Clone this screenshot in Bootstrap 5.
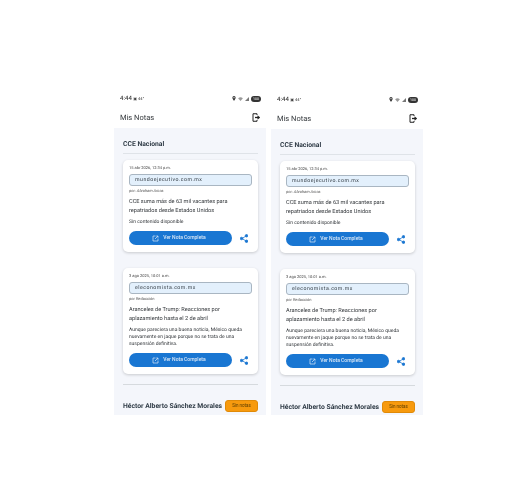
<!DOCTYPE html>
<html lang="es">

<head>
  <meta charset="UTF-8">
  <meta name="viewport" content="width=device-width, initial-scale=1.0">
  <link rel="stylesheet" href="https://cdn.jsdelivr.net/npm/bootstrap@5.3.0/dist/css/bootstrap.min.css">
  <title>Mis Notas</title>
  <style>
    body {
      font-family: Roboto, "Liberation Sans", sans-serif;
      background-color: #fff;
      color: #2b2f33;
      text-rendering: geometricPrecision;
    }

    .screens {
      padding: 90px 0 0 114px;
      gap: 5px;
    }

    .phone {
      width: 152px;
      height: 325px;
      overflow: hidden;
      background-color: #fff;
      filter: blur(.3px);
    }

    .phone-b {
      margin-top: 1px;
      height: 324px;
    }

    .status-bar {
      height: 17px;
      padding: 0 5px 0 6px;
      font-size: 6px;
      color: #444;
    }

    .status-time {
      font-weight: 500;
    }

    .status-sub {
      font-size: 4px;
    }

    .status-icons {
      gap: 2px;
    }

    .battery {
      width: 10px;
      height: 6px;
      border-radius: 3px;
      background-color: #333;
      color: #fff;
      font-size: 3.5px;
      line-height: 6px;
      text-align: center;
    }

    .app-bar {
      height: 21px;
      padding: 0 6px 0 6px;
      font-size: 7.5px;
      color: #33373b;
    }

    .notes-panel {
      background-color: #f4f6fb;
      height: 287px;
      padding: 11px 8px 0 9px;
    }

    .section-name {
      font-size: 6.8px;
      font-weight: 700;
      color: #2f3b46;
      line-height: 10px;
      margin: 0;
    }

    .section-rule {
      border-top: 1px solid #dfe3e8;
      margin: 4px 0 6px;
    }

    .note-card {
      background-color: #fff;
      border-radius: 5px;
      box-shadow: 0 1px 3px rgba(0, 0, 0, .18);
      padding: 5px 6px 7px;
    }

    .note-date {
      font-size: 4px;
      line-height: 6px;
      color: #444;
    }

    .url-box {
      height: 12px;
      margin-top: 3px;
      padding-left: 5px;
      font-size: 5.2px;
      letter-spacing: .5px;
      line-height: 10px;
      color: #39424a;
      background-color: #e3f0fc;
      border: 1px solid #a9b6c2;
      border-radius: 3px;
    }

    .note-author {
      font-size: 4px;
      line-height: 6px;
      margin-top: 2px;
      color: #555;
    }

    .note-title {
      font-size: 5.6px;
      line-height: 8.5px;
      margin-top: 4px;
      color: #33373b;
    }

    .note-body {
      font-size: 5px;
      line-height: 7px;
      margin-top: 4px;
      color: #33373b;
    }

    .note-actions {
      margin-top: 5px;
    }

    .full-btn {
      width: 103px;
      height: 14px;
      padding: 0 3px 0 0;
      font-size: 5px;
      font-weight: 500;
      border: 0;
      border-radius: 7px;
      background-color: #1976d2;
      color: #dce9f7;
    }

    .share-icon {
      margin-left: 8px;
    }

    .note-gap {
      height: 16px;
    }

    .list-rule {
      border-top: 1px solid #d6dade;
      margin: 10px 0 15px;
    }

    .person-row {
      height: 12px;
    }

    .none-btn {
      width: 33px;
      height: 12px;
      padding: 0;
      font-size: 4.5px;
      color: #5a3c00;
      background-color: #f79a0e;
      border: 1px solid #e08a08;
      border-radius: 3px;
    }
  </style>
</head>

<body>
  <div class="screens d-flex align-items-start">
    <div class="phone">
      <div class="status-bar d-flex align-items-center justify-content-between">
        <span class="status-time">4:44 <span class="status-sub">▣ 44°</span></span>
        <span class="status-icons d-flex align-items-center">
          <svg width="4" height="5" viewBox="0 0 10 12"><path d="M5 0a4 4 0 0 0-4 4c0 3 4 8 4 8s4-5 4-8a4 4 0 0 0-4-4z" fill="#333"/><circle cx="5" cy="4" r="1.5" fill="#fff"/></svg>
          <svg width="5" height="4" viewBox="0 0 12 10"><path d="M0 3a9 9 0 0 1 12 0L6 10z" fill="#999"/></svg>
          <svg width="4" height="4" viewBox="0 0 10 10"><path d="M10 0v10H0z" fill="#777"/></svg>
          <span class="battery">100</span>
        </span>
      </div>
      <div class="app-bar d-flex align-items-center justify-content-between">
        <span>Mis Notas</span>
        <svg width="8" height="9" viewBox="0 0 16 18" fill="none" stroke="#222" stroke-width="2"><path d="M10 4V1.500H2v15h8V14"/><path d="M6 9h9" stroke-width="2.600"/><path d="M11.500 5.500L15.500 9l-4 3.500z" fill="#222" stroke-width="1"/></svg>
      </div>
      <div class="notes-panel">
        <h2 class="section-name">CCE Nacional</h2>
        <div class="section-rule"></div>
        <div class="note-card">
          <div class="note-date">15 abr 2026, 12:34 p.m.</div>
          <div class="url-box">mundoejecutivo.com.mx</div>
          <div class="note-author">por: <em>Abraham Arcos</em></div>
          <div class="note-title">CCE suma más de 63 mil vacantes para repatriados desde Estados Unidos</div>
          <div class="note-body">Sin contenido disponible</div>
          <div class="note-actions d-flex align-items-center">
            <button class="btn full-btn d-flex align-items-center justify-content-center gap-1" type="button">
              <svg width="7" height="7" viewBox="0 0 14 14" fill="none" stroke="#dce9f7" stroke-width="1.4"><path d="M7 2H2v10h10V7"/><path d="M6 8l6-6M8.5 2H12v3.5"/></svg>
              Ver Nota Completa
            </button>
            <svg class="share-icon" width="8" height="9" viewBox="0 0 16 18" fill="none" stroke="#1976d2" stroke-width="1.6"><path d="M12 4L4 9l8 5"/><circle cx="13" cy="3.5" r="2.5" fill="#1976d2"/><circle cx="3" cy="9" r="2.5" fill="#1976d2"/><circle cx="13" cy="14.5" r="2.5" fill="#1976d2"/></svg>
          </div>
        </div>
        <div class="note-gap"></div>
        <div class="note-card">
          <div class="note-date">3 ago 2025, 10:01 a.m.</div>
          <div class="url-box">eleconomista.com.mx</div>
          <div class="note-author">por Redacción</div>
          <div class="note-title">Aranceles de Trump: Reacciones por aplazamiento hasta el 2 de abril</div>
          <div class="note-body">Aunque pareciera una buena noticia, México queda nuevamente en jaque porque no se trata de una suspensión definitiva.</div>
          <div class="note-actions d-flex align-items-center">
            <button class="btn full-btn d-flex align-items-center justify-content-center gap-1" type="button">
              <svg width="7" height="7" viewBox="0 0 14 14" fill="none" stroke="#dce9f7" stroke-width="1.4"><path d="M7 2H2v10h10V7"/><path d="M6 8l6-6M8.5 2H12v3.5"/></svg>
              Ver Nota Completa
            </button>
            <svg class="share-icon" width="8" height="9" viewBox="0 0 16 18" fill="none" stroke="#1976d2" stroke-width="1.6"><path d="M12 4L4 9l8 5"/><circle cx="13" cy="3.5" r="2.5" fill="#1976d2"/><circle cx="3" cy="9" r="2.5" fill="#1976d2"/><circle cx="13" cy="14.5" r="2.5" fill="#1976d2"/></svg>
          </div>
        </div>
        <div class="list-rule"></div>
        <div class="person-row d-flex align-items-center justify-content-between">
          <h2 class="section-name text-nowrap">Héctor Alberto Sánchez Morales</h2>
          <button class="btn none-btn" type="button">Sin notas</button>
        </div>
      </div>
    </div>

    <div class="phone phone-b">
      <div class="status-bar d-flex align-items-center justify-content-between">
        <span class="status-time">4:44 <span class="status-sub">▣ 44°</span></span>
        <span class="status-icons d-flex align-items-center">
          <svg width="4" height="5" viewBox="0 0 10 12"><path d="M5 0a4 4 0 0 0-4 4c0 3 4 8 4 8s4-5 4-8a4 4 0 0 0-4-4z" fill="#333"/><circle cx="5" cy="4" r="1.5" fill="#fff"/></svg>
          <svg width="5" height="4" viewBox="0 0 12 10"><path d="M0 3a9 9 0 0 1 12 0L6 10z" fill="#999"/></svg>
          <svg width="4" height="4" viewBox="0 0 10 10"><path d="M10 0v10H0z" fill="#777"/></svg>
          <span class="battery">100</span>
        </span>
      </div>
      <div class="app-bar d-flex align-items-center justify-content-between">
        <span>Mis Notas</span>
        <svg width="8" height="9" viewBox="0 0 16 18" fill="none" stroke="#222" stroke-width="2"><path d="M10 4V1.500H2v15h8V14"/><path d="M6 9h9" stroke-width="2.600"/><path d="M11.500 5.500L15.500 9l-4 3.500z" fill="#222" stroke-width="1"/></svg>
      </div>
      <div class="notes-panel">
        <h2 class="section-name">CCE Nacional</h2>
        <div class="section-rule"></div>
        <div class="note-card">
          <div class="note-date">15 abr 2026, 12:34 p.m.</div>
          <div class="url-box">mundoejecutivo.com.mx</div>
          <div class="note-author">por: <em>Abraham Arcos</em></div>
          <div class="note-title">CCE suma más de 63 mil vacantes para repatriados desde Estados Unidos</div>
          <div class="note-body">Sin contenido disponible</div>
          <div class="note-actions d-flex align-items-center">
            <button class="btn full-btn d-flex align-items-center justify-content-center gap-1" type="button">
              <svg width="7" height="7" viewBox="0 0 14 14" fill="none" stroke="#dce9f7" stroke-width="1.4"><path d="M7 2H2v10h10V7"/><path d="M6 8l6-6M8.5 2H12v3.5"/></svg>
              Ver Nota Completa
            </button>
            <svg class="share-icon" width="8" height="9" viewBox="0 0 16 18" fill="none" stroke="#1976d2" stroke-width="1.6"><path d="M12 4L4 9l8 5"/><circle cx="13" cy="3.5" r="2.5" fill="#1976d2"/><circle cx="3" cy="9" r="2.5" fill="#1976d2"/><circle cx="13" cy="14.5" r="2.5" fill="#1976d2"/></svg>
          </div>
        </div>
        <div class="note-gap"></div>
        <div class="note-card">
          <div class="note-date">3 ago 2025, 10:01 a.m.</div>
          <div class="url-box">eleconomista.com.mx</div>
          <div class="note-author">por Redacción</div>
          <div class="note-title">Aranceles de Trump: Reacciones por aplazamiento hasta el 2 de abril</div>
          <div class="note-body">Aunque pareciera una buena noticia, México queda nuevamente en jaque porque no se trata de una suspensión definitiva.</div>
          <div class="note-actions d-flex align-items-center">
            <button class="btn full-btn d-flex align-items-center justify-content-center gap-1" type="button">
              <svg width="7" height="7" viewBox="0 0 14 14" fill="none" stroke="#dce9f7" stroke-width="1.4"><path d="M7 2H2v10h10V7"/><path d="M6 8l6-6M8.5 2H12v3.5"/></svg>
              Ver Nota Completa
            </button>
            <svg class="share-icon" width="8" height="9" viewBox="0 0 16 18" fill="none" stroke="#1976d2" stroke-width="1.6"><path d="M12 4L4 9l8 5"/><circle cx="13" cy="3.5" r="2.5" fill="#1976d2"/><circle cx="3" cy="9" r="2.5" fill="#1976d2"/><circle cx="13" cy="14.5" r="2.5" fill="#1976d2"/></svg>
          </div>
        </div>
        <div class="list-rule"></div>
        <div class="person-row d-flex align-items-center justify-content-between">
          <h2 class="section-name text-nowrap">Héctor Alberto Sánchez Morales</h2>
          <button class="btn none-btn" type="button">Sin notas</button>
        </div>
      </div>
    </div>
  </div>

  <script src="https://cdn.jsdelivr.net/npm/bootstrap@5.3.0/dist/js/bootstrap.bundle.min.js"></script>
</body>

</html>
